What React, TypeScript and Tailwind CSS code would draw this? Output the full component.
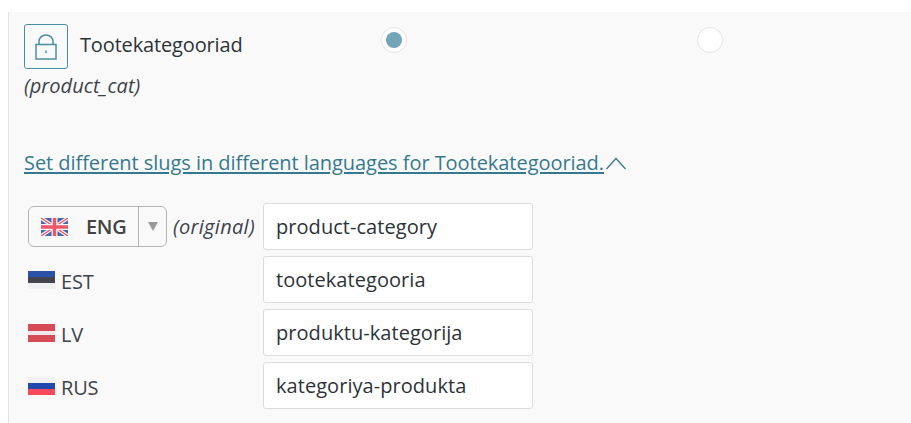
const fontStack = "font-['Open_Sans','Noto_Sans',sans-serif]";

function UkFlag() {
  return (
    <svg width="27" height="18" viewBox="0 0 27 18" className="shrink-0">
      <rect width="27" height="18" fill="#4a66ad" />
      <path d="M0 0L27 18M27 0L0 18" stroke="#f4f4f4" strokeWidth="3.6" />
      <path d="M0 0L27 18M27 0L0 18" stroke="#f0566a" strokeWidth="1.3" />
      <path d="M13.5 0V18M0 9H27" stroke="#f4f4f4" strokeWidth="6" />
      <path d="M13.5 0V18M0 9H27" stroke="#f0566a" strokeWidth="3.4" />
    </svg>
  );
}

function StripeFlag({ stripes }: { stripes: string[] }) {
  return (
    <div className="flex flex-col w-[27px] h-[18px] mb-[3px] shrink-0">
      {stripes.map((c, i) => (
        <div key={i} className="flex-1" style={{ backgroundColor: c }} />
      ))}
    </div>
  );
}

function SlugInput({ value }: { value: string }) {
  return (
    <div className="w-[270px] h-[47px] flex items-center px-3 bg-white border border-[#dcdcdc] rounded-[3px] text-[20px] text-[#2c3338] tracking-[0.05px]">
      {value}
    </div>
  );
}

function LangRow({ stripes, code, value }: { stripes: string[]; code: string; value: string }) {
  return (
    <div className="flex items-center h-[47px]">
      <div className="w-[239px] shrink-0 pl-1 flex items-center gap-[6px] pt-[4px] text-[20px] text-[#3c434a] tracking-[-0.2px]">
        <StripeFlag stripes={stripes} />
        <span>{code}</span>
      </div>
      <SlugInput value={value} />
    </div>
  );
}

export default function App() {
  return (
    <div className={`${fontStack} w-[911px] h-[423px] bg-white pt-3 pl-2 overflow-hidden`}>
      <div className="h-full bg-[#f9f9f9] border-l border-[#e2e2e2] pl-[15px] pt-3">
        <div className="flex items-start">
          <div className="w-[300px] shrink-0">
            <div className="flex items-center gap-3">
              <div className="w-11 h-[45px] flex items-center justify-center border border-[#4b8ea3] rounded-[3px]">
                <svg width="22" height="26" viewBox="0 0 22 26" fill="none" stroke="#4b8ea3" strokeWidth="1.5">
                  <rect x="1" y="10.5" width="20" height="14.5" />
                  <path d="M4 10.5V7.5a7 6.5 0 0 1 14 0v3" />
                  <path d="M11 16.5v2.5" />
                </svg>
              </div>
              <span className="mb-1 text-[20px] text-[#2c3338] tracking-[-0.15px]">Tootekategooriad</span>
            </div>
            <div className="italic text-[20px] text-[#3c434a] tracking-[0.05px] leading-[27px] mt-[3px]">(product_cat)</div>
          </div>
          <div className="w-[373px] pl-[57px] pt-[3px] shrink-0">
            <div className="w-[26px] h-[26px] rounded-full bg-white border border-[#e4e4e4] flex items-center justify-center">
              <div className="w-4 h-4 rounded-full bg-[#72a5b7]" />
            </div>
          </div>
          <div className="pt-[3px]">
            <div className="w-[26px] h-[26px] rounded-full bg-white border border-[#e4e4e4]" />
          </div>
        </div>

        <div className="flex items-center mt-[50px] h-[27px]">
          <span className="text-[20px] text-[#35798f] underline underline-offset-2 tracking-[-0.05px] whitespace-nowrap">
            Set different slugs in different languages for Tootekategooriad.
          </span>
          <svg width="22" height="14" viewBox="0 0 22 14" fill="none" stroke="#35798f" strokeWidth="1.3" className="ml-[1px]">
            <path d="M1.5 13L11 2.5L20.5 13" />
          </svg>
        </div>

        <div className="flex flex-col gap-[6px] mt-[27px]">
          <div className="flex items-center h-[47px]">
            <div className="w-[239px] pl-1 flex items-center gap-[6px] shrink-0">
              <div className="w-[139px] h-[41px] flex items-center bg-[#f9f9f9] border border-[#b4b4b4] rounded-[6px] shrink-0">
                <div className="flex-1 flex items-center gap-[18px] pl-3 text-[20px] font-semibold text-[#444] tracking-[-0.3px]">
                  <UkFlag />
                  <span>ENG</span>
                </div>
                <div className="w-[28px] h-full border-l border-[#b4b4b4] flex items-center justify-center">
                  <div className="w-0 h-0 border-l-[5px] border-r-[5px] border-t-[9px] border-l-transparent border-r-transparent border-t-[#999]" />
                </div>
              </div>
              <span className="italic text-[20px] text-[#3c434a] tracking-[0.3px] whitespace-nowrap">(original)</span>
            </div>
            <SlugInput value="product-category" />
          </div>
          <LangRow stripes={["#2a52a8", "#44444f", "#f0f0f0"]} code="EST" value="tootekategooria" />
          <LangRow stripes={["#d64c56", "#d64c56", "#f0e8e8", "#d64c56", "#d64c56"]} code="LV" value="produktu-kategorija" />
          <LangRow stripes={["#f0f0f0", "#2249ad", "#f74b5b"]} code="RUS" value="kategoriya-produkta" />
        </div>
      </div>
    </div>
  );
}
